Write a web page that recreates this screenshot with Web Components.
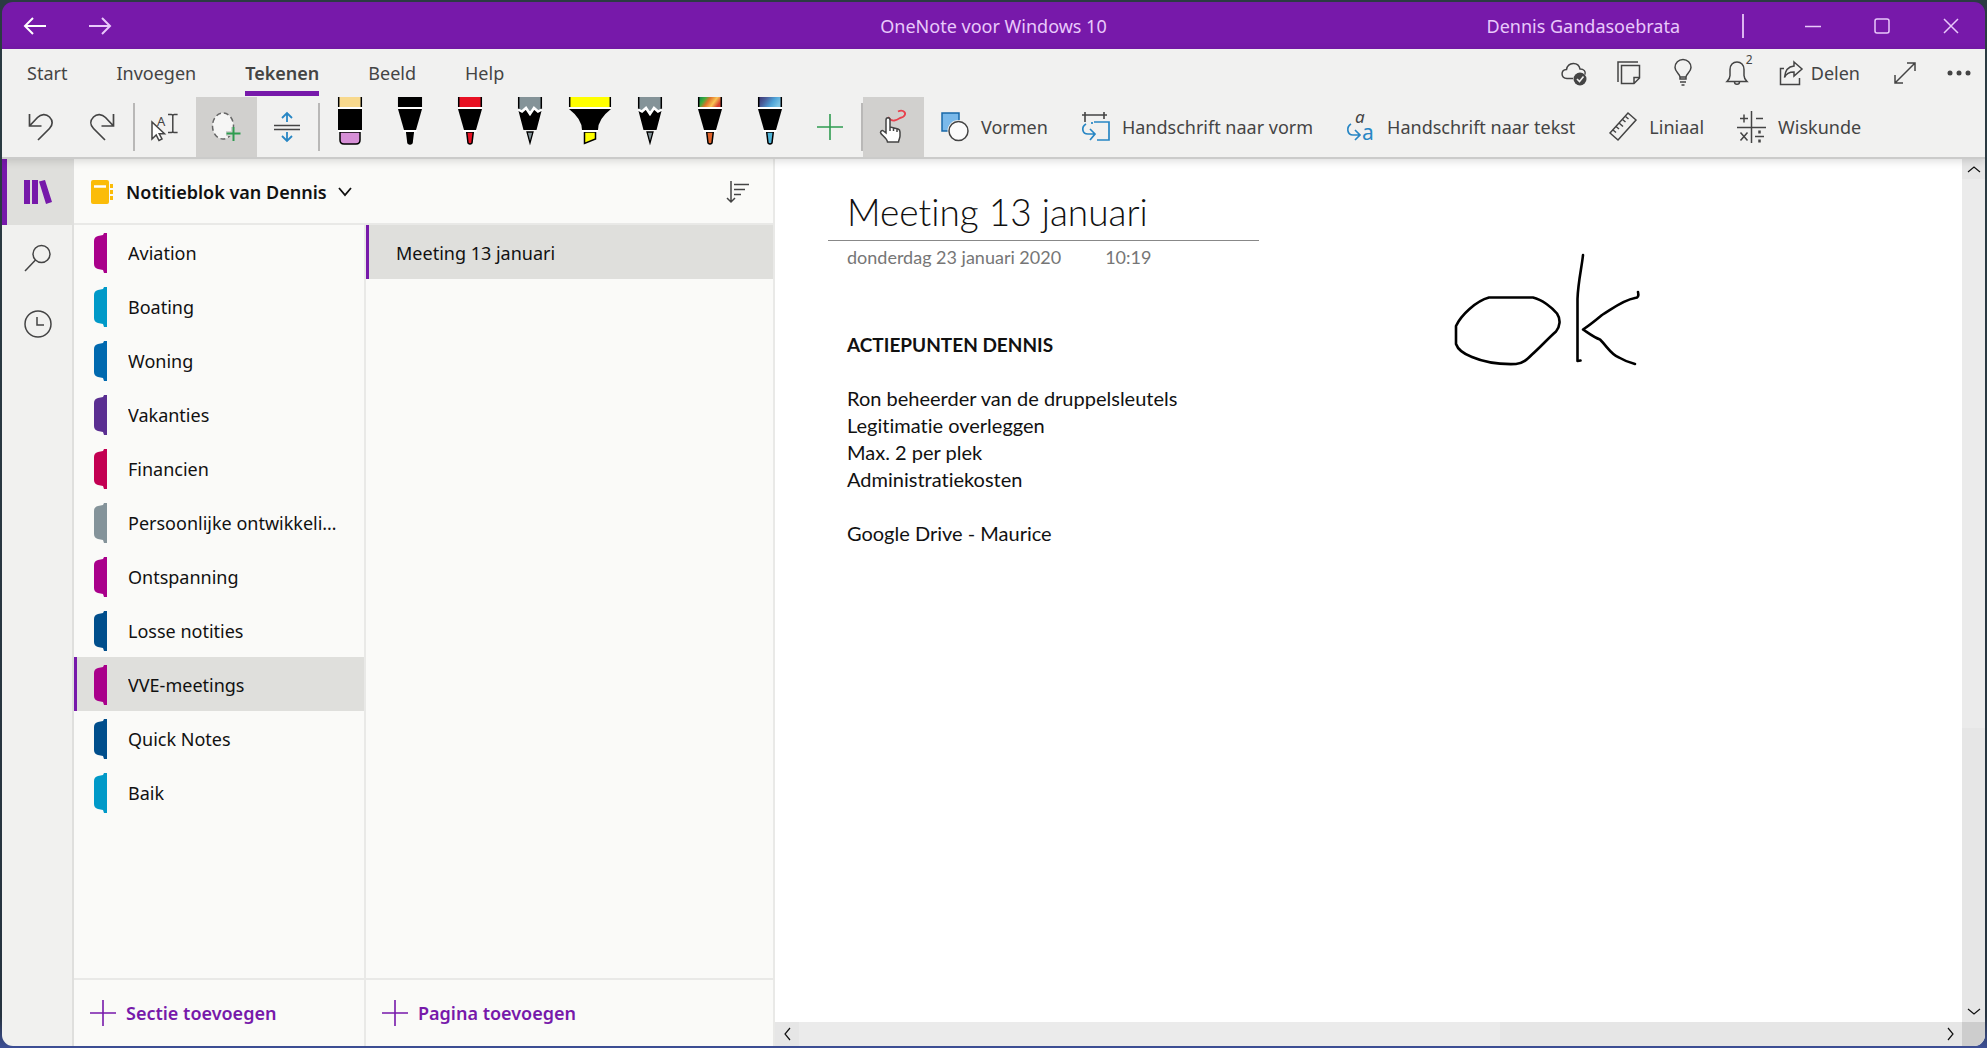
<!DOCTYPE html>
<html lang="nl">
<head>
<meta charset="utf-8">
<title>OneNote voor Windows 10</title>
<style>
    html, body {
        height: 100%;
        margin: 0;
    }
    body {
        background: linear-gradient(to bottom, #2b3b42, #26333f 97%, #3d4f96);
        font-family: "Noto Sans", "Open Sans", sans-serif;
        font-size: 18px;
        color: #444;
    }
</style>
</head>
<body>
<note-app></note-app>

<script>
// name: [width, height, svg content]
const icons = {
    back: [24, 18, '<path d="M23 9H2M10 1 2 9l8 8" stroke-width="2"/>'],
    forward: [24, 18, '<path d="M1 9h21M14 1l8 8-8 8" stroke-width="2"/>'],
    minimize: [16, 16, '<path d="M0 8.5h16"/>'],
    maximize: [16, 16, '<rect x="1" y="1" width="14" height="14" rx="2"/>'],
    close: [16, 16, '<path d="M1 1l14 14M15 1 1 15"/>'],
    cloud: [26, 24, '<path d="M12 17.500H6C-.5 17-.5 9 5.500 8.500 7 .5 17.500.5 19 8c4 0 6 2.500 5 5.500"/><circle cx="19" cy="18" r="6.500" fill="currentColor" stroke="none"/><path d="M16 18l2.500 2.500 4-5" stroke="#f1f1f0" stroke-width="1.600"/>'],
    notes: [24, 24, '<path d="M1 21V1h20"/><path d="M4.500 4.500h18V17L17 22.500H4.500zM22.500 16.500H17v6"/>'],
    bulb: [24, 26, '<path d="M9 19v-2c0-3-5-5-5-9.500a8 8 0 0 1 16 0C20 12 15 14 15 17v2zM9 22h6M10.500 25h3M9 17h6"/>'],
    bell: [24, 26, '<path d="M2 21.500h20c-2-2-3-3.500-3-6V9.500C19 5 16 2 12 2S5 5 5 9.500v6c0 2.500-1 4-3 6zM9.500 22c0 3 5 3 5 0"/>'],
    share: [24, 26, '<path d="M5 8.500H1.500v16h19V18"/><path d="M15 2l8 7-8 7v-4C10 12 7 14 5.500 17.500 6 11 9.500 6.500 15 6z"/>'],
    expand: [24, 24, '<path d="M2 22 22 2M14 2h8v8M2 14v8h8"/>'],
    more: [24, 24, '<g fill="currentColor" stroke="none"><circle cx="3" cy="12" r="2.500"/><circle cx="12" cy="12" r="2.500"/><circle cx="21" cy="12" r="2.500"/></g>'],
    undo: [28, 30, '<path d="M2.500 2v12h12M2.500 14l8-8.500C14 2 19 1.500 22.500 5s3.500 8 0 11.500L11 28" stroke-width="1.700"/>'],
    redo: [28, 30, '<path d="M25.500 2v12h-12M25.500 14l-8-8.500C14 2 9 1.500 5.500 5s-3.500 8 0 11.500L17 28" stroke-width="1.700"/>'],
    select: [32, 30, '<path d="M3 10v17l4.200-4 2.800 5.500 3-1.500-2.800-5.200H15.500z" fill="#fff"/><text x="8" y="14" font-size="13">A</text><path d="M19 2.500h3.500q1 0 1.300 1 .3-1 1.300-1h3.500M19 20.500h3.500q1 0 1.300-1 .3 1 1.300 1h3.500M23.800 3.500v16"/>'],
    lasso: [32, 32, '<ellipse cx="13" cy="15" rx="10.500" ry="13" fill="#f6f6f5" stroke="#666" stroke-dasharray="5 3"/><path d="M16 22.500h14M23.500 16v14" stroke="#d1d0ce" stroke-width="5"/><path d="M16.500 22.500h14M23.500 16v14" stroke="#2f9c50" stroke-width="2"/>'],
    space: [28, 32, '<path d="M1 14.500h26M1 18.500h26" stroke-width="1.700"/><path d="M14 11V2M9 7l5-5 5 5M14 21v9M9 25l5 5 5-5" stroke="#2786c4" stroke-width="1.800"/>'],
    plus: [26, 26, '<path d="M13 0v26M0 13h26" stroke-width="1.600"/>'],
    touch: [30, 34, '<path d="M10 7c4 6 9 3 12 1 5-1 7-5 3-7-1-.5-3-.5-5 .5" stroke="#e8414d" stroke-width="1.800"/><path d="M8 23V10c0-3 4-3 4 0v7l8 2c1.500.5 2 1.500 2 3v4c0 2-1 3-1.500 6H9.500C9 28 3 25 2.500 22.500c0-2 2-2.300 3-1.500zM12 17v4M15.500 18v3M19 19v3" fill="#fff"/>'],
    shapes: [28, 30, '<path d="M1 1h17v18H1z" fill="#7ab9ea" stroke="#1868a8"/><circle cx="17.500" cy="19" r="11" fill="#f1f1f0" stroke="none"/><circle cx="17.500" cy="19" r="9.500" fill="#fbfbfb"/>'],
    inkshape: [28, 30, '<path d="M3 0v10M22 0v7M0 3h25" stroke-width="1.600"/><g stroke="#2786c4" stroke-width="1.700"><path d="M12 10h15v18H15M10 10v2"/><path d="M4 12C-1 15 0 22 6 22h7M8 17l5 5-5 6"/></g>'],
    inktext: [28, 30, '<text x="8" y="11" font-size="17" font-style="italic">a</text><text x="15" y="28" font-size="21" style="fill:#2786c4">a</text><g stroke="#2786c4" stroke-width="1.700"><path d="M4 12C-1 15 0 23 6 23h7M8 18l5 5-5 5"/></g>'],
    ruler: [28, 30, '<path d="M1 21 19 1l8 7L9 28z"/><path d="M4 18l3 2.500M7 14.500l3 2.500M10 11l4 3.500M13.500 7.500l3 2.500M16.500 4.500l3 2.500"/>'],
    math: [28, 32, '<path d="M13.500 0v32M-1 16.500h29M2 7.500h8M6 3.500v8M18 7.500h7M2.500 21.500l7 8M9.500 21.500l-7 8M17 25.500h9"/><path d="M21.500 19.500v3M21.500 28.500v3" stroke-width="2.500"/>'],
    books: [28, 26, '<path d="M0 1h6v24H0zM8 1h6v24H8zM15 2.500l6-1.500 7 22-6 2z" fill="currentColor" stroke="none"/>'],
    search: [28, 28, '<circle cx="17.500" cy="10" r="8.500"/><path d="M11.500 16 1 27"/>'],
    recent: [28, 28, '<circle cx="14" cy="14" r="13"/><path d="M13 7v8h7"/>'],
    notebook: [24, 24, '<path d="M2 0h14q2 0 2 2v20q0 2-2 2H2q-2 0-2-2V2q0-2 2-2z" fill="#fbbc09" stroke="none"/><path d="M3 6.500h12" stroke="#fff" stroke-width="2.500"/><path d="M19 6h3M19 12h3M19 18h3" stroke="#fbbc09" stroke-width="4"/>'],
    chevron: [14, 10, '<path d="M1 1l6 7 6-7" stroke-width="1.800"/>'],
    sort: [24, 24, '<path d="M5 1v21M1 18l4 4 4-4M8 4.500h15M8 9.500h11M8 14.500h7"/>'],
    up: [14, 12, '<path d="M1 9l6-5 6 5" stroke-width="1.200"/>'],
    down: [14, 12, '<path d="M1 3l6 5 6-5" stroke-width="1.200"/>'],
    left: [12, 14, '<path d="M9 1 4 7l5 6" stroke-width="1.200"/>'],
    right: [12, 14, '<path d="M4 1l5 6-5 6" stroke-width="1.200"/>']
};

class UiIcon extends HTMLElement {
    constructor() {
        super();
        this.attachShadow({mode: 'open'});
    }

    connectedCallback() {
        const [w, h, body] = icons[this.getAttribute('name')];
        this.shadowRoot.innerHTML = `
            <style>
                :host { display: inline-flex; flex: none; }
                svg { display: block; fill: none; stroke: currentColor; stroke-width: 1.5; overflow: visible; }
                text { fill: currentColor; stroke: none; font-family: "Noto Sans", sans-serif; }
            </style>
            <svg width="${w}" height="${h}" viewBox="0 0 ${w} ${h}" aria-hidden="true">${body}</svg>
        `;
    }
}
customElements.define('ui-icon', UiIcon);

// one pen in the ribbon: type is eraser, marker, pencil or highlighter
class PenTool extends HTMLElement {
    constructor() {
        super();
        this.attachShadow({mode: 'open'});
    }

    connectedCallback() {
        const type = this.getAttribute('type');
        const color = this.getAttribute('color');
        const tip = this.getAttribute('tip') || color;
        this.shadowRoot.innerHTML = `
            <style>
                :host { display: block; flex: none; }
                button {
                    display: flex; justify-content: center; align-items: flex-start;
                    width: 60px; height: 60px; padding: 0; border: 0; background: none; cursor: pointer;
                }
                svg { display: block; }
            </style>
            <button aria-label="${this.getAttribute('label')}">
                <svg width="44" height="50" viewBox="0 0 44 50">
                    <defs>
                        <linearGradient id="rainbow" x2="1" y2=".3">
                            <stop offset="0" stop-color="#0a7a55"/><stop offset=".3" stop-color="#3fae3c"/>
                            <stop offset=".5" stop-color="#e0732a"/><stop offset=".75" stop-color="#f9c555"/>
                            <stop offset="1" stop-color="#d8402f"/>
                        </linearGradient>
                        <linearGradient id="galaxy" x2="1" y2=".3">
                            <stop offset="0" stop-color="#3b2f6b"/><stop offset=".35" stop-color="#4a5f9c"/>
                            <stop offset=".7" stop-color="#4fa4d8"/><stop offset="1" stop-color="#7cc4e4"/>
                        </linearGradient>
                    </defs>
                    ${this.shape(type, color, tip)}
                </svg>
            </button>
        `;
    }

    shape(type, color, tip) {
        const cap = `
            <path d="M10 0h24v10H10z" fill="${color}"/>
            <path d="M10.700 0v10M33.300 0v10" stroke="#000" stroke-width="1.500"/>
            <path d="M10 10h24v2H10z" fill="#fff"/>`;
        if (type === 'eraser') {
            return cap + `
                <path d="M10 12h24v21H10z"/>
                <path d="M12 35h20v8q0 4-4 4H16q-4 0-4-4z" fill="${tip}" stroke="#000" stroke-width="1.500"/>
                <path d="M10 33h24v2H10z" fill="#fff"/>`;
        }
        if (type === 'highlighter') {
            return `
                <path d="M1 0h42v10H1z" fill="${color}"/>
                <path d="M1.700 0v10M42.300 0v10" stroke="#000" stroke-width="1.500"/>
                <path d="M1 10h42v2H1z" fill="#fff"/>
                <path d="M1 12h42Q30 22 30 33H14Q14 22 1 12z"/>
                <path d="M16.500 35h11v7l-11 4.500z" fill="${color}" stroke="#000" stroke-width="1.500"/>
                <path d="M14 33h16v2H14z" fill="#fff"/>`;
        }
        if (type === 'pencil') {
            return `
                <path d="M10 0h24v14H10z" fill="${color}"/>
                <path d="M10.700 0v12M33.300 0v12" stroke="#000" stroke-width="1.500"/>
                <path d="M10 12l4 2 4-3 4 6 4-6 4 3 4-2-5.500 21h-13z"/>
                <path d="M10 12.500l4 2 4-3.500 4 6 4-6 4 3.500 4-2" fill="none" stroke="#fff" stroke-width="2.500"/>
                <path d="M19 35h6l-3 11z" fill="${color}" stroke="#000" stroke-width="1.300"/>`;
        }
        return cap + `
            <path d="M10 12h24l-6 21H16z"/>
            <path d="M18.700 35h6.600l-1.300 11q-2 2-4 0z" fill="${tip}" stroke="#000" stroke-width="1.500"/>
            <path d="M15 33h14v2H15z" fill="#fff"/>`;
    }
}
customElements.define('pen-tool', PenTool);

class ToolButton extends HTMLElement {
    constructor() {
        super();
        this.attachShadow({mode: 'open'});
    }

    connectedCallback() {
        this.shadowRoot.innerHTML = `
            <style>
                :host { display: block; flex: none; }
                button {
                    display: flex; align-items: center; justify-content: center; gap: 12px;
                    min-width: 61px; height: 60px; padding: 0 2px 0 0; border: 0; background: none;
                    font: inherit; color: inherit; white-space: nowrap; cursor: pointer;
                }
                :host([wide]) button { padding: 0 17px; }
                :host([active]) button { background: #d1d0ce; }
            </style>
            <button aria-label="${this.getAttribute('label') || this.textContent}">
                <ui-icon name="${this.getAttribute('icon')}"></ui-icon><slot></slot>
            </button>
        `;
    }
}
customElements.define('tool-button', ToolButton);

class TitleBar extends HTMLElement {
    constructor() {
        super();
        this.attachShadow({mode: 'open'}).innerHTML = `
            <style>
                :host {
                    display: grid; grid-template-columns: 1fr auto 1fr; align-items: center;
                    height: 47px; background: #7719aa; color: #e9c9fb;
                }
                div { display: flex; align-items: center; }
                .right { justify-content: flex-end; }
                button {
                    display: flex; align-items: center; justify-content: center;
                    height: 44px; padding: 0; border: 0; background: none; color: inherit; cursor: pointer;
                }
                .left button { width: 65px; }
                .left button:first-child { color: #fff; }
                .right button { width: 69px; }
                .line { width: 2px; height: 24px; margin: 0 34px 0 62px; background: #dcb5f0; }
            </style>
            <div class="left">
                <button aria-label="Terug"><ui-icon name="back"></ui-icon></button>
                <button aria-label="Vooruit"><ui-icon name="forward"></ui-icon></button>
            </div>
            <slot></slot>
            <div class="right">
                <slot name="user"></slot>
                <span class="line"></span>
                <button aria-label="Minimaliseren"><ui-icon name="minimize"></ui-icon></button>
                <button aria-label="Maximaliseren"><ui-icon name="maximize"></ui-icon></button>
                <button aria-label="Sluiten"><ui-icon name="close"></ui-icon></button>
            </div>
        `;
    }
}
customElements.define('title-bar', TitleBar);

class RibbonBar extends HTMLElement {
    constructor() {
        super();
        this.attachShadow({mode: 'open'}).innerHTML = `
            <style>
                :host {
                    display: block; position: relative; background: #f1f1f0;
                    border-bottom: 2px solid #cbcbca; box-shadow: 0 2px 8px rgba(0, 0, 0, .14);
                }
                .top, .tabs, .actions, .tools { display: flex; align-items: center; }
                .top { justify-content: space-between; height: 48px; padding: 0 14px 0 25px; }
                .tabs { gap: 49px; }
                button {
                    position: relative; display: flex; align-items: center; gap: 8px;
                    padding: 0; border: 0; background: none; font: inherit; color: inherit; cursor: pointer;
                }
                .tabs button { height: 46px; box-sizing: border-box; border: solid transparent; border-width: 5px 0; }
                .tabs .active { font-weight: 600; border-bottom-color: #7719aa; }
                .actions { gap: 30px; }
                .share { padding-right: 3px; }
                .count { position: absolute; left: 21px; top: -8px; font-size: 12px; line-height: 16px; }
                .tools { height: 60px; padding-left: 9px; }
                .line { flex: none; width: 2px; height: 48px; background: #b9b8b7; }
            </style>
            <div class="top">
                <div class="tabs" role="tablist">
                    <button role="tab">Start</button>
                    <button role="tab">Invoegen</button>
                    <button role="tab" class="active" aria-selected="true">Tekenen</button>
                    <button role="tab">Beeld</button>
                    <button role="tab">Help</button>
                </div>
                <div class="actions">
                    <button aria-label="Synchronisatie"><ui-icon name="cloud"></ui-icon></button>
                    <button aria-label="Notities"><ui-icon name="notes"></ui-icon></button>
                    <button aria-label="Tips"><ui-icon name="bulb"></ui-icon></button>
                    <button aria-label="Meldingen"><ui-icon name="bell"></ui-icon><span class="count">2</span></button>
                    <button class="share"><ui-icon name="share"></ui-icon>Delen</button>
                    <button aria-label="Volledig scherm"><ui-icon name="expand"></ui-icon></button>
                    <button aria-label="Meer"><ui-icon name="more"></ui-icon></button>
                </div>
            </div>
            <div class="tools">
                <tool-button icon="undo" label="Ongedaan maken"></tool-button>
                <tool-button icon="redo" label="Opnieuw"></tool-button>
                <span class="line"></span>
                <tool-button icon="select" label="Selecteren"></tool-button>
                <tool-button icon="lasso" label="Lasso" active></tool-button>
                <tool-button icon="space" label="Ruimte invoegen"></tool-button>
                <span class="line"></span>
                <pen-tool type="eraser" color="#f8d98d" tip="#d68fd6" label="Gum"></pen-tool>
                <pen-tool type="marker" color="#000" label="Zwarte pen"></pen-tool>
                <pen-tool type="marker" color="#e81123" label="Rode pen"></pen-tool>
                <pen-tool type="pencil" color="#849398" label="Potlood"></pen-tool>
                <pen-tool type="highlighter" color="#ff0" label="Markeerstift"></pen-tool>
                <pen-tool type="pencil" color="#849398" label="Potlood 2"></pen-tool>
                <pen-tool type="marker" color="url(#rainbow)" tip="#e0632a" label="Regenboogpen"></pen-tool>
                <pen-tool type="marker" color="url(#galaxy)" tip="#4fb4d8" label="Melkwegpen"></pen-tool>
                <tool-button icon="plus" label="Pen toevoegen" style="color: #2f9c50"></tool-button>
                <span class="line"></span>
                <tool-button icon="touch" label="Tekenen met aanraking" active></tool-button>
                <tool-button icon="shapes" wide>Vormen</tool-button>
                <tool-button icon="inkshape" wide>Handschrift naar vorm</tool-button>
                <tool-button icon="inktext" wide>Handschrift naar tekst</tool-button>
                <tool-button icon="ruler" wide>Liniaal</tool-button>
                <tool-button icon="math" wide>Wiskunde</tool-button>
            </div>
        `;
    }
}
customElements.define('ribbon-bar', RibbonBar);

class NavRail extends HTMLElement {
    constructor() {
        super();
        this.attachShadow({mode: 'open'}).innerHTML = `
            <style>
                :host { display: flex; flex-direction: column; background: #f1f1ef; border-right: 2px solid #dfdfdd; }
                button {
                    display: flex; align-items: center; justify-content: center;
                    width: 70px; height: 66px; padding: 0 3px 0 0; border: 0; border-left: 5px solid transparent;
                    background: none; color: #444; cursor: pointer;
                }
                .active { background: #dfdfdc; border-color: #7719aa; color: #7719aa; }
            </style>
            <button class="active" aria-label="Notitieblokken"><ui-icon name="books"></ui-icon></button>
            <button aria-label="Zoeken"><ui-icon name="search"></ui-icon></button>
            <button aria-label="Recente notities"><ui-icon name="recent"></ui-icon></button>
        `;
    }
}
customElements.define('nav-rail', NavRail);

class ListItem extends HTMLElement {
    constructor() {
        super();
        this.attachShadow({mode: 'open'});
    }

    connectedCallback() {
        const color = this.getAttribute('color');
        const tab = color ? `<svg width="13" height="40" viewBox="0 0 13 40"><path d="M13 0v40h-3l-1-3-5-1Q0 35 0 31V8q0-4 4-5l5-1 1-2z" fill="${color}"/></svg>` : '';
        this.shadowRoot.innerHTML = `
            <style>
                :host { display: block; }
                button {
                    display: flex; align-items: center; gap: 21px; width: 100%; height: 54px;
                    padding: 1px 24px 0 17px; border: 0; border-left: 3px solid transparent;
                    background: none; font: inherit; color: #111; text-align: left; cursor: pointer;
                }
                :host(:not([color])) button { padding-left: 27px; }
                :host([selected]) button { background: #dfdfdc; border-color: #7719aa; }
                svg { flex: none; }
                span { overflow: hidden; text-overflow: ellipsis; white-space: nowrap; }
            </style>
            <button>${tab}<span><slot></slot></span></button>
        `;
    }
}
customElements.define('list-item', ListItem);

// list with an add button under it
class ListColumn extends HTMLElement {
    constructor() {
        super();
        this.attachShadow({mode: 'open'});
    }

    connectedCallback() {
        this.shadowRoot.innerHTML = `
            <style>
                :host { display: flex; flex-direction: column; min-width: 0; border-right: 2px solid #e9e9e7; }
                .items { flex: 1; }
                button {
                    display: flex; align-items: center; gap: 10px; height: 68px; padding: 0 16px;
                    border: 0; border-top: 2px solid #e9e9e7; background: none;
                    font: inherit; font-weight: 600; color: #7719aa; cursor: pointer;
                }
            </style>
            <div class="items"><slot></slot></div>
            <button><ui-icon name="plus"></ui-icon>${this.getAttribute('add')}</button>
        `;
    }
}
customElements.define('list-column', ListColumn);

class NotebookPanel extends HTMLElement {
    constructor() {
        super();
        this.attachShadow({mode: 'open'}).innerHTML = `
            <style>
                :host {
                    display: grid; grid-template-rows: 66px 1fr; grid-template-columns: 292px 409px;
                    background: #fafaf8;
                }
                header {
                    grid-column: 1 / 3; display: flex; align-items: center; justify-content: space-between;
                    padding: 1px 23px 0 17px; border: solid #e9e9e7; border-width: 0 2px 2px 0;
                }
                button {
                    display: flex; align-items: center; gap: 11px; padding: 0; border: 0; background: none;
                    font: inherit; font-weight: 600; color: #111; cursor: pointer;
                }
                .sort { color: #444; }
            </style>
            <header>
                <button><ui-icon name="notebook"></ui-icon>Notitieblok van Dennis<ui-icon name="chevron"></ui-icon></button>
                <button class="sort" aria-label="Sorteren"><ui-icon name="sort"></ui-icon></button>
            </header>
            <list-column add="Sectie toevoegen">
                <list-item color="#a9008b">Aviation</list-item>
                <list-item color="#0099c8">Boating</list-item>
                <list-item color="#0069af">Woning</list-item>
                <list-item color="#5a2e91">Vakanties</list-item>
                <list-item color="#c30052">Financien</list-item>
                <list-item color="#84939a">Persoonlijke ontwikkeling</list-item>
                <list-item color="#a9008b">Ontspanning</list-item>
                <list-item color="#004e8c">Losse notities</list-item>
                <list-item color="#a9008b" selected>VVE-meetings</list-item>
                <list-item color="#004e8c">Quick Notes</list-item>
                <list-item color="#0099c8">Baik</list-item>
            </list-column>
            <list-column add="Pagina toevoegen">
                <list-item selected>Meeting 13 januari</list-item>
            </list-column>
        `;
    }
}
customElements.define('notebook-panel', NotebookPanel);

class NotePage extends HTMLElement {
    constructor() {
        super();
        this.attachShadow({mode: 'open'}).innerHTML = `
            <style>
                :host {
                    display: grid; grid-template-columns: 1fr 23px; grid-template-rows: 1fr 24px;
                    min-width: 0; background: #fff; color: #111;
                }
                article {
                    position: relative; padding: 30px 53px;
                    font-family: Lato, Carlito, sans-serif; font-size: 20px; line-height: 27px;
                    font-variant-ligatures: none;
                }
                h1 {
                    width: 412px; margin: 0; padding: 0 0 5px 19px; border-bottom: 1px solid #888;
                    font-size: 37px; font-weight: 300; line-height: 46px;
                }
                .date { display: flex; gap: 44px; padding-left: 19px; color: #767676; font-size: 18px; line-height: 32px; }
                .text { padding: 58px 0 0 19px; }
                p { margin: 0 0 27px; }
                b { font-size: 19px; }
                /* handwriting lies free on the page */
                .ink { position: absolute; left: 675px; top: 90px; overflow: visible; }
                .bar { display: flex; background: #e6e6e6; }
                .bar span { background: #ebebeb; }
                .bar ui-icon { align-items: center; justify-content: center; }
                .v { flex-direction: column; }
                .v ui-icon { height: 20px; }
                .v span { flex: 2; }
                .v i { flex: 1; }
                .h ui-icon { width: 24px; }
                .h span { flex: 8; }
                .h i { flex: 5; }
                .corner { background: #cdcdcd; }
            </style>
            <article>
                <h1>Meeting 13 januari</h1>
                <div class="date"><span>donderdag 23 januari 2020</span><span>10:19</span></div>
                <div class="text">
                    <p><b>ACTIEPUNTEN DENNIS</b></p>
                    <p>Ron beheerder van de druppelsleutels<br>Legitimatie overleggen<br>Max. 2 per plek<br>Administratiekosten</p>
                    <p>Google Drive - Maurice</p>
                </div>
                <svg class="ink" width="200" height="120" viewBox="1450 249 200 120" fill="none" stroke="#000" stroke-width="2.600" stroke-linecap="round" stroke-linejoin="round">
                    <path d="M1489 297.500h44c9 2 19 10 24 16 4 6 3 13-1 18-8 7-16 16-24 23-5 5-9 9-16 9.500-14 .5-30-1-44-7-8-3-14-7-16-13v-18c5-11 20-25 33-28.500z"/>
                    <path d="M1583 255c-1 11-5 27-5.500 44v62l3-.5"/>
                    <path d="M1638 292c1 4 0 6-3 6-12 2-23 11-33 17-6 5-12 10-19 14.500 6 4 11 8 17 10 8 8 11 15 19 18 5 3 10 5 16 6.500"/>
                </svg>
            </article>
            <div class="bar v"><ui-icon name="up"></ui-icon><span></span><i></i><ui-icon name="down"></ui-icon></div>
            <div class="bar h"><ui-icon name="left"></ui-icon><span></span><i></i><ui-icon name="right"></ui-icon></div>
            <div class="corner"></div>
        `;
    }
}
customElements.define('note-page', NotePage);

class NoteApp extends HTMLElement {
    constructor() {
        super();
        this.attachShadow({mode: 'open'}).innerHTML = `
            <style>
                :host { display: block; height: 100vh; box-sizing: border-box; padding: 2px; }
                .window { display: flex; flex-direction: column; height: 100%; border-radius: 11px; overflow: hidden; }
                main { flex: 1; display: grid; grid-template-columns: auto auto 1fr; min-height: 0; }
                ribbon-bar { z-index: 1; }
            </style>
            <div class="window">
                <title-bar>OneNote voor Windows 10<span slot="user">Dennis Gandasoebrata</span></title-bar>
                <ribbon-bar></ribbon-bar>
                <main>
                    <nav-rail></nav-rail>
                    <notebook-panel></notebook-panel>
                    <note-page></note-page>
                </main>
            </div>
        `;
    }
}
customElements.define('note-app', NoteApp);
</script>
</body>
</html>
